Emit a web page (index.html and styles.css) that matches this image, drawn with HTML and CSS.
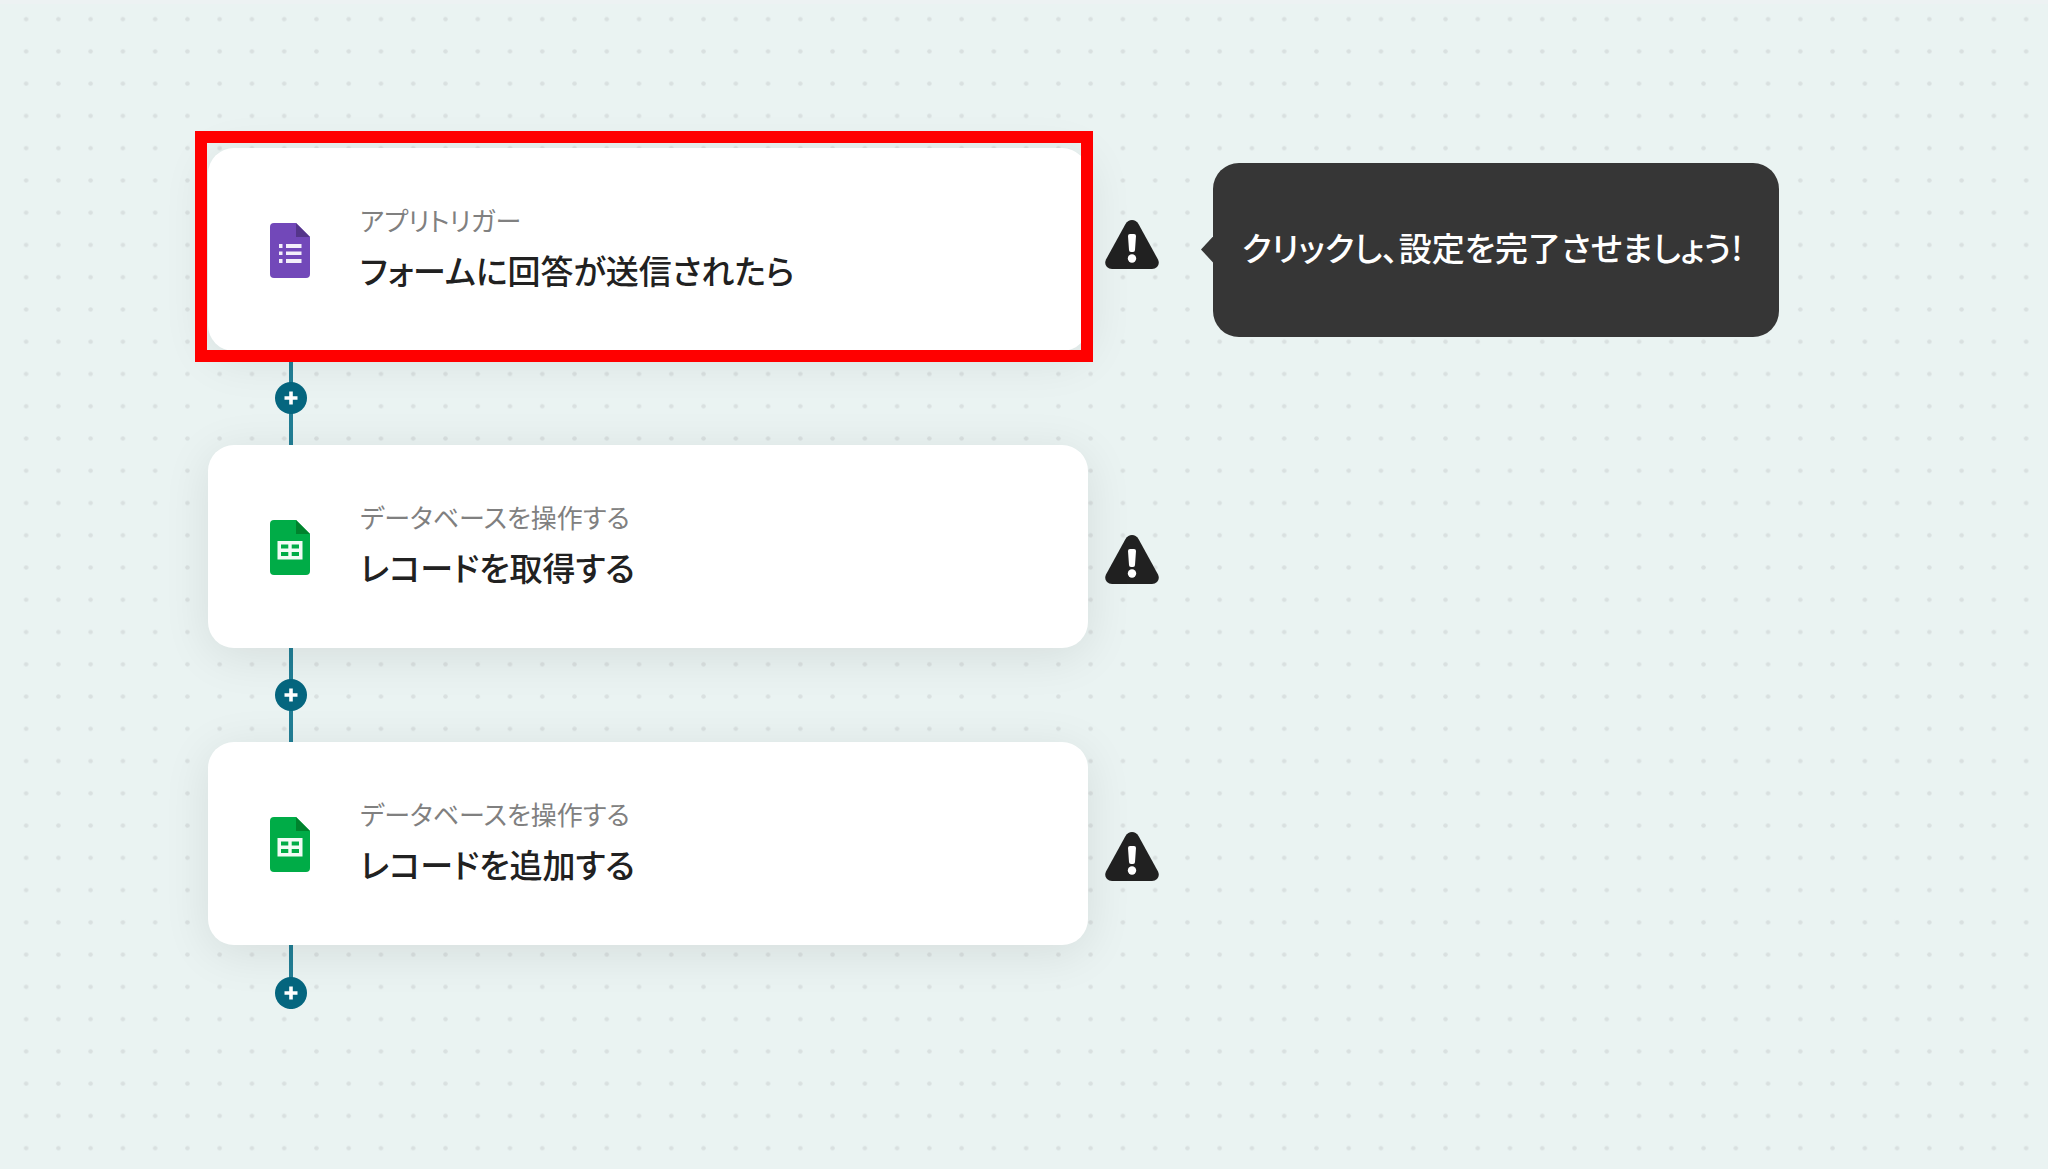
FILE: index.html
```html
<!DOCTYPE html>
<html lang="ja">
<head>
<meta charset="utf-8">
<meta name="viewport" content="width=device-width, initial-scale=1">
<title>フロー</title>
<link rel="stylesheet" href="styles.css">
</head>
<body>
<svg class="symbols" aria-hidden="true">
  <symbol id="icon-form" viewBox="0 0 40 55">
    <path fill="#7248b9" d="M4 0H26L40 14V51a4 4 0 0 1-4 4H4a4 4 0 0 1-4-4V4a4 4 0 0 1 4-4Z"/>
    <path fill="#54358a" d="M26 0 40 14H26Z"/>
    <path fill="#f3effa" d="M9 21h3.500v4H9zM16 21h15.500v4H16zM9 28.500h3.500v3.500H9zM16 28.500h15.500v3.500H16zM9 36h3.500v4H9zM16 36h15.500v4H16z"/>
  </symbol>
  <symbol id="icon-sheet" viewBox="0 0 40 55">
    <path fill="#00ac47" d="M4 0H26L40 14V51a4 4 0 0 1-4 4H4a4 4 0 0 1-4-4V4a4 4 0 0 1 4-4Z"/>
    <path fill="#00832d" d="M26 0 40 14H26Z"/>
    <path fill="#f2fbf5" fill-rule="evenodd" d="M7.500 21h25v18.500h-25zM11 24.500v4h7.300v-4zM21.700 24.500v4H29v-4zM11 32v4h7.300v-4zM21.700 32v4H29v-4z"/>
  </symbol>
  <symbol id="icon-warning" viewBox="0 0 54 49">
    <path fill="#212121" d="M20.500 4Q23 0 27 0t6.500 4L53 39.500q2 4.500-1 7.500-2 2-5 2H7q-3 0-5-2-3-3-1-7.500Z"/>
    <path fill="#fff" d="M23 16q0-2 2-2h4q2 0 2 2l-1 14q0 2-2 2h-2q-2 0-2-2Z"/>
    <circle cx="27" cy="38.500" r="4.200" fill="#fff"/>
  </symbol>
  <symbol id="icon-plus" viewBox="0 0 32 32">
    <path stroke="#fff" stroke-width="3.600" d="M16 9.500v13M9.500 16h13"/>
  </symbol>
</svg>

<main class="flow">
  <div class="step">
    <button type="button" class="card card-selected">
      <svg class="app-icon" aria-hidden="true"><use href="#icon-form"/></svg>
      <span class="card-text">
        <span class="card-kind">アプリトリガー</span>
        <span class="card-title">フォームに回答が送信されたら</span>
      </span>
    </button>
    <svg class="warning warning-first" role="img" aria-label="未設定"><use href="#icon-warning"/></svg>
    <div class="tooltip" role="tooltip">クリックし、設定を完了させましょう!</div>
  </div>

  <div class="connector">
    <button type="button" class="add" aria-label="追加"><svg class="plus"><use href="#icon-plus"/></svg></button>
  </div>

  <div class="step">
    <button type="button" class="card">
      <svg class="app-icon" aria-hidden="true"><use href="#icon-sheet"/></svg>
      <span class="card-text">
        <span class="card-kind">データベースを操作する</span>
        <span class="card-title">レコードを取得する</span>
      </span>
    </button>
    <svg class="warning" role="img" aria-label="未設定"><use href="#icon-warning"/></svg>
  </div>

  <div class="connector">
    <button type="button" class="add" aria-label="追加"><svg class="plus"><use href="#icon-plus"/></svg></button>
  </div>

  <div class="step">
    <button type="button" class="card">
      <svg class="app-icon" aria-hidden="true"><use href="#icon-sheet"/></svg>
      <span class="card-text">
        <span class="card-kind">データベースを操作する</span>
        <span class="card-title">レコードを追加する</span>
      </span>
    </button>
    <svg class="warning" role="img" aria-label="未設定"><use href="#icon-warning"/></svg>
  </div>

  <div class="connector connector-end">
    <button type="button" class="add" aria-label="追加"><svg class="plus"><use href="#icon-plus"/></svg></button>
  </div>
</main>
</body>
</html>
```

FILE: styles.css
```css
* {
  box-sizing: border-box;
}

body {
  margin: 0;
  min-height: 100vh;
  border-top: 4px solid #edf2f3;
  font-family: "Noto Sans CJK JP", "Noto Sans", sans-serif;
  font-feature-settings: "palt";
  background-color: #eaf3f2;
  /* dot grid: 31 dots per 1000px tile */
  background-image: url("data:image/svg+xml,%3Csvg xmlns='http://www.w3.org/2000/svg' width='1000' height='1000' viewBox='0 0 31 31'%3E%3Cpattern id='d' width='1' height='1' patternUnits='userSpaceOnUse'%3E%3Ccircle cx='.5' cy='.5' r='.07' fill='%23d9e0e0'/%3E%3C/pattern%3E%3Crect width='31' height='31' fill='url(%23d)'/%3E%3C/svg%3E");
  background-size: 1000px 1000px;
  background-position: 10px 3px;
}

.symbols {
  display: none;
}

.flow {
  padding: 144px 208px 0;
}

.step {
  display: flex;
  align-items: flex-start;
}

.card {
  position: relative;
  display: flex;
  align-items: center;
  gap: 50px;
  flex: 0 1 880px;
  min-height: 203px;
  padding: 2px 62px 0;
  border: 0;
  border-radius: 26px;
  background: #fff;
  box-shadow: 0 8px 48px rgba(0, 0, 0, 0.09);
  color: #212121;
  font: inherit;
  font-feature-settings: inherit;
  text-align: left;
  cursor: pointer;
}

/* highlight frame drawn over the card and its connector */
.card-selected::after {
  content: "";
  position: absolute;
  inset: -17px -5px -11px -13px;
  border: 12px solid #f00;
}

.app-icon {
  flex: none;
  width: 40px;
  height: 55px;
}

.card-text {
  display: flex;
  flex-direction: column;
  gap: 6px;
  padding-bottom: 8px;
}

.card-kind {
  color: #808080;
  font-size: 26px;
  line-height: 40px;
}

.card-title {
  font-size: 33px;
  font-weight: 500;
  line-height: 48px;
}

.warning {
  flex: none;
  width: 54px;
  height: 49px;
  margin: 90px 0 0 17px;
}

.warning-first {
  margin-top: 72px;
}

.tooltip {
  position: relative;
  align-self: center;
  margin-left: 54px;
  padding: 60px 37px 66px 29px;
  border-radius: 26px;
  background: #363636;
  color: #fff;
  font-size: 33px;
  font-weight: 500;
  line-height: 48px;
  white-space: nowrap;
}

.tooltip::before {
  content: "";
  position: absolute;
  top: 50%;
  left: -12px;
  width: 12px;
  height: 26px;
  margin-top: -13px;
  background: inherit;
  clip-path: polygon(100% 0, 0 50%, 100% 100%);
}

.connector {
  display: flex;
  align-items: center;
  width: 32px;
  height: 94px;
  margin-left: 67px;
  background: linear-gradient(#227e95, #227e95) center / 4px 100% no-repeat;
}

.connector-end {
  align-items: flex-end;
  height: 64px;
}

.add {
  width: 32px;
  height: 32px;
  padding: 0;
  border: 0;
  border-radius: 50%;
  background: #05667f;
  cursor: pointer;
}

.plus {
  display: block;
  width: 32px;
  height: 32px;
}
```
